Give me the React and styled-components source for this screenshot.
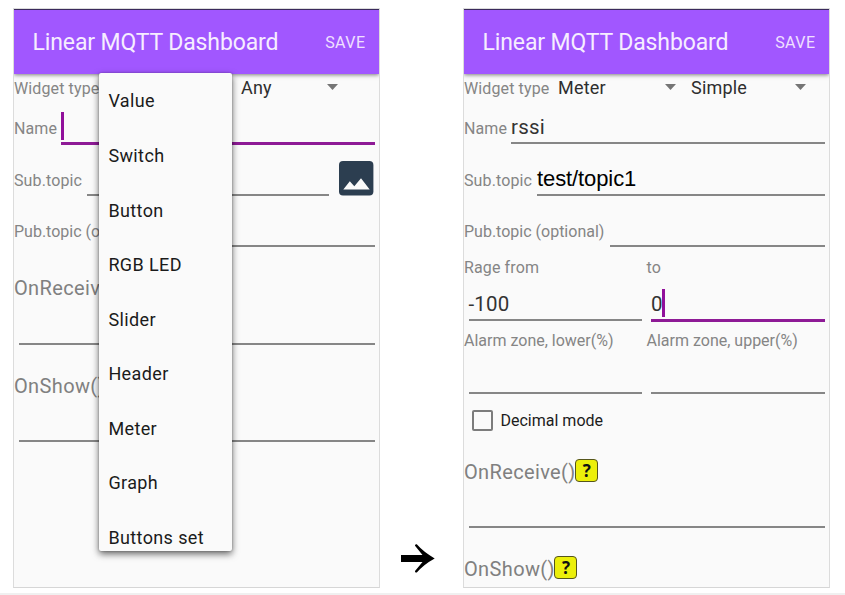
import React from "react";
import styled, { createGlobalStyle, css } from "styled-components";

const GlobalStyle = createGlobalStyle`
  * { box-sizing: border-box; }
  body { margin: 0; background: #fff; font-family: Roboto, "Noto Sans", sans-serif; overflow: hidden; }
`;

const Page = styled.main`
  display: flex;
  align-items: flex-start;
  width: 845px;
  height: 595px;
  padding: 8px 0 0 13px;
  border-bottom: 2px solid #f0f0f0;
`;

const Phone = styled.section`
  position: relative;
  flex: none;
  width: 367px;
  height: 580px;
  border: 1px solid #dcdcdc;
  border-bottom-color: #d6d6d6;
  background: #fafafa;
`;

const AppBar = styled.header`
  position: relative;
  display: flex;
  align-items: center;
  justify-content: space-between;
  height: 65px;
  padding: 1px 13.5px 0 18.5px;
  border-top: 1px solid #3a2a5c;
  background: #a157ff;
  box-shadow: 0 1px 4px rgba(0, 0, 0, 0.5);
  clip-path: inset(0 0 -8px 0);
  color: #f6edff;
`;

const Title = styled.h1`
  margin: 0;
  font-size: 23px;
  font-weight: 400;
  line-height: 28px;
  letter-spacing: -0.12px;
`;

const SaveButton = styled.button`
  padding: 0;
  border: 0;
  background: none;
  color: #f0e0ff;
  font: 400 16px/20px Roboto, sans-serif;
  letter-spacing: 0.45px;
`;

const Label = styled.span`
  flex: none;
  color: #858585;
  font-size: 16px;
  line-height: 20px;
  letter-spacing: ${(p) => (p.$tight ? "0" : "0.12px")};
  white-space: nowrap;
`;

const TypeRow = styled.div`
  display: flex;
  align-items: flex-start;
  height: 28px;
  padding-top: 4px;
`;

const TypeLabel = styled(Label)`
  width: 94px;
  margin-top: 1px;
`;

const SelectBox = styled.div`
  display: flex;
  align-items: center;
  justify-content: space-between;
  width: ${(p) => p.$width}px;
  height: 20px;
  margin-right: 15px;
  color: #2e2e2e;
  font-size: 18px;
  line-height: 20px;
  letter-spacing: 0.2px;
`;

const Caret = styled.span`
  width: 11px;
  height: 6px;
  margin-top: -2px;
  margin-left: auto;
  background: #757575;
  clip-path: polygon(0 0, 100% 0, 50% 100%);
`;

const FormRow = styled.div`
  display: flex;
  align-items: flex-end;
  height: ${(p) => p.$height}px;
  padding-right: ${(p) => p.$right ?? 4}px;
`;

const RowLabel = styled(Label)`
  width: ${(p) => p.$width}px;
  margin-bottom: 5px;
`;

const Field = styled.div`
  display: flex;
  flex: 1;
  align-items: flex-end;
  height: 34px;
  padding-bottom: 3px;
  border-bottom: 2px solid #868686;
  color: #333;
  font-size: 20.5px;
  line-height: 24px;
  letter-spacing: 0.2px;
  ${(p) =>
    p.$focused &&
    css`
      border-bottom: 3px solid #8e1a96;
      margin-bottom: -1px;
      height: 35px;
    `}
`;

const TopicText = styled.span`
  color: #000;
  font-family: "Liberation Sans", Arial, sans-serif;
  font-size: 22px;
  letter-spacing: -0.1px;
`;

const TextCursor = styled.span`
  width: 3px;
  height: 28px;
  margin: 0 0 -1px -0.5px;
  background: #91109b;
`;

const Columns = styled.div`
  display: grid;
  grid-template-columns: 1fr 1fr;
  padding-top: ${(p) => p.$top}px;
`;

const Column = styled.div`
  display: flex;
  flex-direction: column;
  height: ${(p) => p.$height}px;
  justify-content: space-between;
`;

const ColumnField = styled(Field)`
  flex: none;
  margin-left: 4.5px;
  margin-right: 4.5px;
`;

const CheckRow = styled.label`
  display: flex;
  align-items: center;
  gap: 7.5px;
  height: 21px;
  margin: 16px 0 0 8px;
  color: #1c1c1c;
  font-size: 16px;
  line-height: 20px;
`;

const CheckBox = styled.span`
  width: 21px;
  height: 21px;
  border: 2px solid #7c7c7c;
  border-radius: 2px;
`;

const Handler = styled.div`
  display: flex;
  align-items: flex-start;
  height: ${(p) => p.$height}px;
  margin-top: ${(p) => p.$top}px;
`;

const HandlerName = styled.span`
  margin-top: 1px;
  color: #808080;
  font-size: 20px;
  line-height: 24px;
  letter-spacing: 0.36px;
`;

const HelpBadge = styled.span`
  display: flex;
  align-items: center;
  justify-content: center;
  width: 23px;
  height: 23px;
  margin-left: -0.4px;
  border: 1px solid #55551c;
  border-radius: 4px;
  background: #ecef0a;
  color: #111;
  font: 700 17px/20px "Open Sans", sans-serif;
`;

const Rule = styled.div`
  height: 2px;
  margin: 0 4px 0 4.5px;
  background: #868686;
`;

const PictureButton = styled.svg`
  display: block;
  flex: none;
  width: 35px;
  height: 35px;
  margin: 0 1.5px 0 9.5px;
`;

const Menu = styled.ul`
  position: absolute;
  z-index: 2;
  left: 85px;
  top: 64px;
  width: 132.5px;
  height: 477.5px;
  margin: 0;
  padding: 1.45px 0 0;
  overflow: hidden;
  border-radius: 2px;
  background: #fafafa;
  box-shadow: 0 3px 7px rgba(0, 0, 0, 0.6), 0 0 2px rgba(0, 0, 0, 0.3);
  list-style: none;
`;

const MenuItem = styled.li`
  height: 54.55px;
  padding-left: 9.4px;
  color: #1b1b1b;
  font-size: 18px;
  line-height: 54.55px;
  letter-spacing: 0.38px;
`;

const FlowArrow = styled.svg`
  flex: none;
  width: 34px;
  height: 29px;
  margin: 536px 28px 0 21px;
`;

const menuItems = ["Value", "Switch", "Button", "RGB LED", "Slider", "Header", "Meter", "Graph", "Buttons set"];

function Header() {
  return (
    <AppBar>
      <Title>Linear MQTT Dashboard</Title>
      <SaveButton>SAVE</SaveButton>
    </AppBar>
  );
}

function Select({ value, width }) {
  return (
    <SelectBox $width={width}>
      {value}
      <Caret />
    </SelectBox>
  );
}

function NewWidgetScreen() {
  return (
    <Phone>
      <Header />
      <TypeRow>
        <TypeLabel>Widget type</TypeLabel>
        <SelectBox $width={118} />
        <Select value="Any" width={97} />
      </TypeRow>
      <FormRow $height={42}>
        <RowLabel $width={47}>Name</RowLabel>
        <Field $focused>
          <TextCursor />
        </Field>
      </FormRow>
      <FormRow $height={52}>
        <RowLabel $width={73}>Sub.topic</RowLabel>
        <Field />
        <PictureButton viewBox="0 0 35 35">
          <rect x="0" y="0" width="34.4" height="34.4" rx="4" fill="#2c3e50" />
          <path d="M4.3 28.6L10.8 20.3L15.3 25.2L22 17.3L30.7 28.6Z" fill="#fafafa" />
        </PictureButton>
      </FormRow>
      <FormRow $height={51}>
        <RowLabel $width={146} $tight>Pub.topic (optional)</RowLabel>
        <Field />
      </FormRow>
      <Handler $top={28} $height={68}>
        <HandlerName>OnReceive()</HandlerName>
      </Handler>
      <Rule />
      <Handler $top={28} $height={67}>
        <HandlerName>OnShow()</HandlerName>
      </Handler>
      <Rule />
      <Menu>
        {menuItems.map((item) => (
          <MenuItem key={item}>{item}</MenuItem>
        ))}
      </Menu>
    </Phone>
  );
}

function MeterScreen() {
  return (
    <Phone>
      <Header />
      <TypeRow>
        <TypeLabel>Widget type</TypeLabel>
        <Select value="Meter" width={118} />
        <Select value="Simple" width={115} />
      </TypeRow>
      <FormRow $height={42}>
        <RowLabel $width={47}>Name</RowLabel>
        <Field>rssi</Field>
      </FormRow>
      <FormRow $height={52}>
        <RowLabel $width={73}>Sub.topic</RowLabel>
        <Field>
          <TopicText>test/topic1</TopicText>
        </Field>
      </FormRow>
      <FormRow $height={51}>
        <RowLabel $width={146} $tight>Pub.topic (optional)</RowLabel>
        <Field />
      </FormRow>
      <Columns $top={11}>
        <Column $height={63}>
          <Label>Rage from</Label>
          <ColumnField>-100</ColumnField>
        </Column>
        <Column $height={63}>
          <Label>to</Label>
          <ColumnField $focused>
            0<TextCursor />
          </ColumnField>
        </Column>
      </Columns>
      <Columns $top={10}>
        <Column $height={63}>
          <Label $tight>Alarm zone, lower(%)</Label>
          <ColumnField />
        </Column>
        <Column $height={63}>
          <Label $tight>Alarm zone, upper(%)</Label>
          <ColumnField />
        </Column>
      </Columns>
      <CheckRow>
        <CheckBox />
        Decimal mode
      </CheckRow>
      <Handler $top={28} $height={67}>
        <HandlerName>OnReceive()</HandlerName>
        <HelpBadge>?</HelpBadge>
      </Handler>
      <Rule />
      <Handler $top={28} $height={23}>
        <HandlerName>OnShow()</HandlerName>
        <HelpBadge>?</HelpBadge>
      </Handler>
    </Phone>
  );
}

export default function App() {
  return (
    <Page>
      <GlobalStyle />
      <NewWidgetScreen />
      <FlowArrow viewBox="0 0 34 29">
        <path d="M0 11H21.5L14 1.8Q13.6 0 15.8 .3Q22.5 8 33.7 14.4Q22.5 20.5 15.8 28.5Q13.6 28.8 14 27L21.5 18H0Z" />
      </FlowArrow>
      <MeterScreen />
    </Page>
  );
}
